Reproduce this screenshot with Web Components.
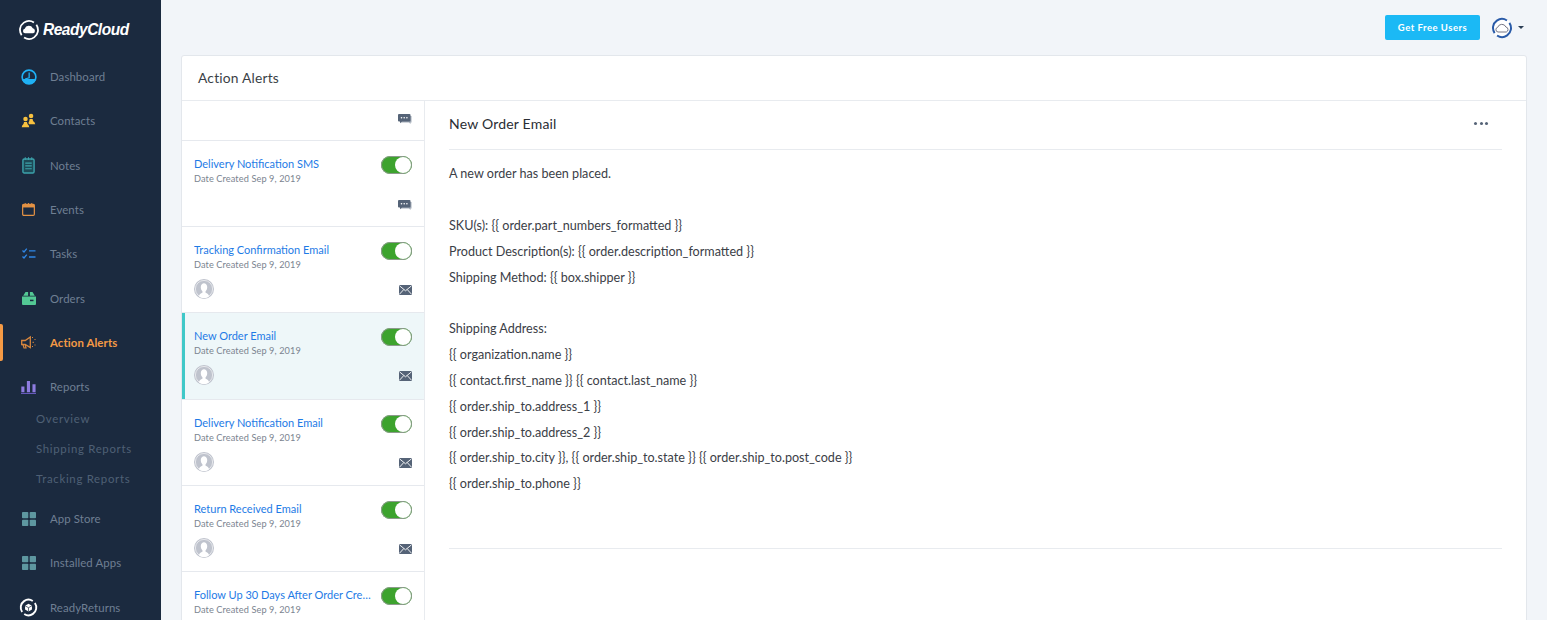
<!DOCTYPE html>
<html>
<head>
<meta charset="utf-8">
<title>Action Alerts</title>
<style>
  html, body { margin: 0; height: 620px; overflow: hidden; background: #f2f5f9; }
  body { font-family: 'Lato', 'Open Sans', sans-serif; }
</style>
</head>
<body>
<rc-app>
  <rc-sidebar slot="sidebar">
    <rc-nav-item icon="dashboard" label="Dashboard"></rc-nav-item>
    <rc-nav-item icon="contacts" label="Contacts"></rc-nav-item>
    <rc-nav-item icon="notes" label="Notes"></rc-nav-item>
    <rc-nav-item icon="events" label="Events"></rc-nav-item>
    <rc-nav-item icon="tasks" label="Tasks"></rc-nav-item>
    <rc-nav-item icon="orders" label="Orders"></rc-nav-item>
    <rc-nav-item icon="alerts" label="Action Alerts" active></rc-nav-item>
    <rc-nav-item icon="reports" label="Reports"></rc-nav-item>
    <rc-sub-item label="Overview"></rc-sub-item>
    <rc-sub-item label="Shipping Reports"></rc-sub-item>
    <rc-sub-item label="Tracking Reports"></rc-sub-item>
    <rc-nav-item icon="apps" label="App Store" class="after-sub"></rc-nav-item>
    <rc-nav-item icon="apps" label="Installed Apps"></rc-nav-item>
    <rc-nav-item icon="returns" label="ReadyReturns"></rc-nav-item>
  </rc-sidebar>
  <rc-topbar slot="topbar"></rc-topbar>
  <rc-card slot="main" heading="Action Alerts">
    <rc-alert-list slot="list">
      <rc-alert-item kind="sms" stub></rc-alert-item>
      <rc-alert-item kind="sms" name="Delivery Notification SMS"></rc-alert-item>
      <rc-alert-item kind="email" name="Tracking Confirmation Email"></rc-alert-item>
      <rc-alert-item kind="email" name="New Order Email" selected></rc-alert-item>
      <rc-alert-item kind="email" name="Delivery Notification Email"></rc-alert-item>
      <rc-alert-item kind="email" name="Return Received Email"></rc-alert-item>
      <rc-alert-item kind="email" name="Follow Up 30 Days After Order Cre…"></rc-alert-item>
    </rc-alert-list>
    <rc-alert-detail slot="detail" heading="New Order Email">
      <p>A new order has been placed.</p>
      <p>&nbsp;</p>
      <p>SKU(s): {{ order.part_numbers_formatted }}</p>
      <p>Product Description(s): {{ order.description_formatted }}</p>
      <p>Shipping Method: {{ box.shipper }}</p>
      <p>&nbsp;</p>
      <p>Shipping Address:</p>
      <p>{{ organization.name }}</p>
      <p>{{ contact.first_name }} {{ contact.last_name }}</p>
      <p>{{ order.ship_to.address_1 }}</p>
      <p>{{ order.ship_to.address_2 }}</p>
      <p>{{ order.ship_to.city }}, {{ order.ship_to.state }} {{ order.ship_to.post_code }}</p>
      <p>{{ order.ship_to.phone }}</p>
    </rc-alert-detail>
  </rc-card>
</rc-app>

<script>
// broken ring shared by the logo, the avatar and ReadyReturns
const ring = (colour, width) => `<circle cx="11" cy="11" r="9" pathLength="100" fill="none" stroke="${colour}" stroke-width="${width}" stroke-dasharray="44 6 44 6" transform="rotate(-35 11 11)"/>`

const navIcons = {
  dashboard: `<svg viewBox="0 0 20 20" width="16" height="16"><circle cx="10" cy="10" r="8.6" fill="none" stroke="#1fb1f5" stroke-width="2"/><path d="M1.6 12.5h16.800v1.200A8.600 8.600 0 0 1 10 18.600a8.600 8.600 0 0 1-8.400-4.900z" fill="#1fb1f5"/><path d="M10.200 4.500v6.500L5 12.500" stroke="#1fb1f5" stroke-width="1.600" fill="none"/></svg>`,
  contacts: `<svg viewBox="0 0 20 20" width="15" height="15"><circle cx="13.400" cy="4" r="3" fill="#f8c13f"/><path d="M10 13c.8-1.400 1.400-3 1.500-5h4c.1 2 1 3.600 2.500 4.400l1 2.600h-8.500z" fill="#f8c13f"/><circle cx="6" cy="8" r="3" fill="#f8c13f"/><path d="M1 19l.6-2.400C3 15.800 3.900 14 4 12h4c.1 2 1 3.800 2.400 4.600L11 19z" fill="#f8c13f"/></svg>`,
  notes: `<svg viewBox="0 0 14 18" width="13" height="17"><rect x="1" y="2" width="12" height="15" rx="1.400" fill="#1d4956" stroke="#3ca3ac" stroke-width="1.500"/><path d="M3.500 6.500h7M3.500 9.500h7M3.500 12.500h7" stroke="#3ca3ac" stroke-width="1.300"/><path d="M3.500 0v3M7 0v3M10.500 0v3" stroke="#3ca3ac" stroke-width="1"/></svg>`,
  events: `<svg viewBox="0 0 14 14" width="13" height="13"><rect x=".7" y="1.500" width="12.600" height="11.800" rx="1.200" fill="none" stroke="#e39244" stroke-width="1.300"/><rect x=".7" y="1.500" width="12.600" height="3.300" fill="#e39244"/><path d="M3.500 0v2.500M7 0v2.500M10.500 0v2.500" stroke="#e39244" stroke-width="1"/></svg>`,
  tasks: `<svg viewBox="0 0 14 12" width="14" height="12"><path d="M.5 2.500l1.500 1.500L4.800.7M.5 8.500L2 10l2.800-3.300" fill="none" stroke="#2f86e6" stroke-width="1.300"/><path d="M7 2.800h6.500M7 9h6.500" stroke="#2f86e6" stroke-width="1.300"/></svg>`,
  orders: `<svg viewBox="0 0 14 13" width="14" height="13"><path d="M0 4.500h14V12a1 1 0 0 1-1 1H1a1 1 0 0 1-1-1z" fill="#53c894"/><path d="M3.500 0h2.600v3.700H1.200zM7.900 0h2.600l2.300 3.700H7.900z" fill="#53c894"/><rect x="8" y="7.700" width="3.500" height="1.500" fill="#1b2a3f"/></svg>`,
  alerts: `<svg viewBox="0 0 16 13" width="16" height="13"><path d="M.7 4.500h3.500L9.300 1v10.500L4.200 8.500H.7z" fill="none" stroke="#d9873e" stroke-width="1.300"/><path d="M2 8.500l1 3.500h2L4.200 8.500" fill="none" stroke="#d9873e" stroke-width="1.200"/><path d="M11 2l1-1M11.500 6.300H13M11 10l1 1M13.500 3.500h1M13.500 9h1" stroke="#d9873e" stroke-width="1"/></svg>`,
  reports: `<svg viewBox="0 0 14 13" width="15" height="14"><path d="M.3 6h2.900v5.500H.3zM5.500 1h2.900v10.500H5.500zM10.700 4h2.900v7.500h-2.900z" fill="#8e7ce0"/><rect x="0" y="12" width="14" height="1" fill="#6a5bc0"/></svg>`,
  apps: `<svg viewBox="0 0 14 14" width="14" height="14"><g fill="#5e97a0"><rect width="6.300" height="6.300" rx=".8"/><rect x="7.700" width="6.300" height="6.300" rx=".8"/><rect y="7.700" width="6.300" height="6.300" rx=".8"/><rect x="7.700" y="7.700" width="6.300" height="6.300" rx=".8"/></g></svg>`,
  returns: `<svg viewBox="0 0 22 22" width="19" height="19">${ring('#fff', 2.2)}<path d="M11 6.800l4 2.200v4.400l-4 2.200-4-2.200V9z" fill="#fff"/><path d="M7 9l4 2.200L15 9M11 11.200v4.400" stroke="#1b2a3f" stroke-width=".8" fill="none"/></svg>`
}

customElements.define('rc-app', class extends HTMLElement {
  constructor () {
    super()
    this.attachShadow({ mode: 'open' }).innerHTML = `
      <style>
        :host { display: grid; grid-template-columns: 161px 1fr; height: 620px; overflow: hidden; }
        #content { display: flex; flex-direction: column; padding: 0 20px 0 20px; min-width: 0; }
      </style>
      <slot name="sidebar"></slot>
      <div id="content">
        <slot name="topbar"></slot>
        <slot name="main"></slot>
      </div>`
  }
})

customElements.define('rc-sidebar', class extends HTMLElement {
  constructor () {
    super()
    this.attachShadow({ mode: 'open' }).innerHTML = `
      <style>
        :host { display: block; height: 620px; overflow: hidden; background: #1b2a3f; }
        #logo { display: flex; align-items: center; gap: 3px; height: 54.5px; padding: 5px 0 0 18px; box-sizing: border-box; }
        #logo span { font: italic 700 17px 'Liberation Sans', sans-serif; color: #fff; letter-spacing: -.5px; transform: scaleX(.91); transform-origin: left; white-space: nowrap; }
      </style>
      <div id="logo">
        <svg viewBox="0 0 22 22" width="22" height="22">${ring('#fff', 1.8)}<path d="M7 14.300a2.300 2.300 0 0 1-.3-4.500A4.400 4.400 0 0 1 14.800 9.300a2.600 2.600 0 0 1 .4 5z" fill="#fff"/></svg>
        <span>ReadyCloud</span>
      </div>
      <div id="nav"><slot></slot></div>`
  }
})

customElements.define('rc-nav-item', class extends HTMLElement {
  constructor () {
    super()
    this.attachShadow({ mode: 'open' }).innerHTML = `
      <style>
        :host { display: flex; align-items: center; height: 44.3px; position: relative; color: #6f7f93; font-size: 11.4px; }
        :host(.after-sub) { margin-top: 3px; }
        :host([active]) { color: #f59a45; font-weight: 700; }
        :host([active])::before { content: ''; position: absolute; left: 0; top: 4px; bottom: 4px; width: 3px; background: #f59a45; border-radius: 0 2px 2px 0; }
        #icon { width: 50px; padding: 0 13px 0 20px; box-sizing: border-box; display: flex; justify-content: center; flex: none; }
        svg { display: block; overflow: visible; flex: none; }
        span { letter-spacing: .1px; white-space: nowrap; }
      </style>
      <div id="icon">${navIcons[this.getAttribute('icon')]}</div>
      <span>${this.getAttribute('label')}</span>`
  }
})

customElements.define('rc-sub-item', class extends HTMLElement {
  constructor () {
    super()
    this.attachShadow({ mode: 'open' }).innerHTML = `
      <style>
        :host { display: flex; align-items: center; height: 30px; padding-left: 36px; color: #4f6075; font-size: 11.4px; letter-spacing: .7px; white-space: nowrap; }
        :host(:first-of-type) { margin-top: -5.5px; }
      </style>
      ${this.getAttribute('label')}`
  }
})

customElements.define('rc-topbar', class extends HTMLElement {
  constructor () {
    super()
    this.attachShadow({ mode: 'open' }).innerHTML = `
      <style>
        :host { display: flex; align-items: center; justify-content: flex-end; height: 55px; flex: none; }
        button { width: 95px; height: 25px; margin-right: 11px; border: 0; border-radius: 2px; background: #1bb9f5; color: #fff; font: 700 9.5px 'Lato', sans-serif; letter-spacing: .5px; padding: 0; }
        #avatar { display: block; margin-right: 5px; flex: none; }
        #caret { width: 0; height: 0; border: 3px solid transparent; border-top: 3.5px solid #2c3e55; border-bottom: 0; margin-right: 3px; }
      </style>
      <button>Get Free Users</button>
      <svg id="avatar" viewBox="0 0 22 22" width="22" height="22"><circle cx="11" cy="11" r="10" fill="#fff"/>${ring('#2a5ba8', 2)}<path d="M7 15a2.400 2.400 0 0 1-.3-4.700A4.400 4.400 0 0 1 14.900 10a2.600 2.600 0 0 1 .4 5z" fill="#fff" stroke="#667" stroke-width=".9"/></svg>
      <div id="caret"></div>`
  }
})

customElements.define('rc-card', class extends HTMLElement {
  constructor () {
    super()
    this.attachShadow({ mode: 'open' }).innerHTML = `
      <style>
        :host { display: block; background: #fff; border: 1px solid #e3e7ec; border-radius: 3px; height: 600px; box-sizing: border-box; overflow: hidden; }
        h2 { margin: 0; height: 44px; line-height: 44px; padding-left: 16px; font-size: 13.8px; font-weight: 400; letter-spacing: .2px; border-bottom: 1px solid #e8ebef; color: #3a3f46; }
        #body { display: grid; grid-template-columns: 243px 1fr; }
      </style>
      <h2>${this.getAttribute('heading')}</h2>
      <div id="body">
        <slot name="list"></slot>
        <slot name="detail"></slot>
      </div>`
  }
})

customElements.define('rc-alert-list', class extends HTMLElement {
  constructor () {
    super()
    this.attachShadow({ mode: 'open' }).innerHTML = `
      <style>
        :host { display: block; border-right: 1px solid #e8ebef; height: 560px; overflow: hidden; }
      </style>
      <slot></slot>`
  }
})

customElements.define('rc-toggle', class extends HTMLElement {
  constructor () {
    super()
    this.attachShadow({ mode: 'open' }).innerHTML = `
      <style>
        :host { display: block; width: 31px; height: 18px; border-radius: 9px; background: #3da32e; position: relative; flex: none; box-shadow: inset 0 0 0 1px #8c9a8c; }
        :host::after { content: ''; position: absolute; right: 1px; top: 1px; width: 16px; height: 16px; background: #fff; border-radius: 50%; }
      </style>`
  }
})

customElements.define('rc-alert-item', class extends HTMLElement {
  constructor () {
    super()
    const kind = this.getAttribute('kind')
    const stub = this.hasAttribute('stub')
    const kindIcon = kind === 'sms'
      ? `<svg id="kind" viewBox="0 0 14 11" width="14" height="11"><path d="M3 2h10.500v6.500h-1V10L11 8.500H3z" fill="#a3acb8"/><path d="M1 0h10.500a1 1 0 0 1 1 1v5.500a1 1 0 0 1-1 1H4L2 9.300V7.500H1a1 1 0 0 1-1-1V1a1 1 0 0 1 1-1z" fill="#556377"/><circle cx="3.500" cy="3.700" r=".8" fill="#fff"/><circle cx="6.200" cy="3.700" r=".8" fill="#fff"/><circle cx="8.900" cy="3.700" r=".8" fill="#fff"/></svg>`
      : `<svg id="kind" viewBox="0 0 13 10" width="13" height="10"><rect width="13" height="10" rx="1" fill="#556377"/><path d="M.5 .8L6.500 5.800 12.500 .8M.5 9.200L4.800 4.500M12.500 9.200L8.200 4.500" fill="none" stroke="#fff" stroke-width=".9"/></svg>`
    this.attachShadow({ mode: 'open' }).innerHTML = `
      <style>
        :host { display: flex; flex-direction: column; height: 86.2px; box-sizing: border-box; padding: 15px 12px 0 12px; border-bottom: 1px solid #e6e9ee; background: #fff; position: relative; }
        :host([stub]) { height: 40px; padding: 0 12px; justify-content: center; }
        :host([selected]) { background: #eef7f9; }
        :host([selected])::before { content: ''; position: absolute; left: 0; top: 0; bottom: 0; width: 3px; background: #3fc8c8; }
        #head { display: flex; justify-content: space-between; gap: 6px; height: 18px; }
        #name { color: #1e7be6; font-size: 11px; line-height: 18px; height: 18px; margin-top: -1px; white-space: nowrap; overflow: hidden; min-width: 0; }
        #date { color: #7b8490; font-size: 9.2px; line-height: 13px; margin-top: -2px; letter-spacing: .1px; }
        #foot { display: flex; justify-content: space-between; align-items: center; height: 20px; margin-top: 8px; }
        :host([stub]) #foot { justify-content: flex-end; margin: 0 0 6px; }
        svg { display: block; }
        #who { width: 20px; height: 20px; }
        #kind { margin-top: ${kind === 'sms' ? 4 : 2}px; }
      </style>
      ${stub ? '' : `
      <div id="head"><span id="name">${this.getAttribute('name')}</span><rc-toggle></rc-toggle></div>
      <div id="date">Date Created Sep 9, 2019</div>`}
      <div id="foot">
        ${kind === 'email' ? `<svg id="who" viewBox="0 0 20 20"><circle cx="10" cy="10" r="10" fill="#bfc3cd"/><circle cx="10" cy="10" r="8.600" fill="#bfc3cd" stroke="#fff" stroke-width=".6"/><path d="M5 17.500c0-2.500 2-3 3.300-3.800.4-.4.300-1.100 0-1.500C7.200 11 6.700 9.500 6.800 7.800 7 5.600 8.400 4.300 10 4.300s3 1.300 3.200 3.500c.1 1.700-.4 3.200-1.500 4.400-.3.400-.4 1.100 0 1.500 1.300.8 3.300 1.300 3.300 3.800a8.800 8.800 0 0 1-10 0z" fill="#fff"/></svg>` : '<span></span>'}
        ${kindIcon}
      </div>`
  }
})

customElements.define('rc-alert-detail', class extends HTMLElement {
  constructor () {
    super()
    this.attachShadow({ mode: 'open' }).innerHTML = `
      <style>
        :host { display: block; padding: 0 24px; font-size: 12.6px; color: #3b4047; }
        #head { display: flex; justify-content: space-between; align-items: center; height: 49px; box-sizing: border-box; padding-bottom: 4px; border-bottom: 1px solid #e8ebef; }
        h3 { margin: 0; font-size: 14px; font-weight: 400; letter-spacing: .2px; color: #2a2e34; }
        #more { display: flex; gap: 2.5px; margin-right: 14px; }
        #more i { width: 3px; height: 3px; border-radius: 50%; background: #556377; }
        #text { padding: 11.3px 0 50.7px; border-bottom: 1px solid #e8ebef; }
        ::slotted(p) { margin: 0; line-height: 25.83px; white-space: nowrap; }
      </style>
      <div id="head"><h3>${this.getAttribute('heading')}</h3><div id="more"><i></i><i></i><i></i></div></div>
      <div id="text"><slot></slot></div>`
  }
})
</script>
</body>
</html>
